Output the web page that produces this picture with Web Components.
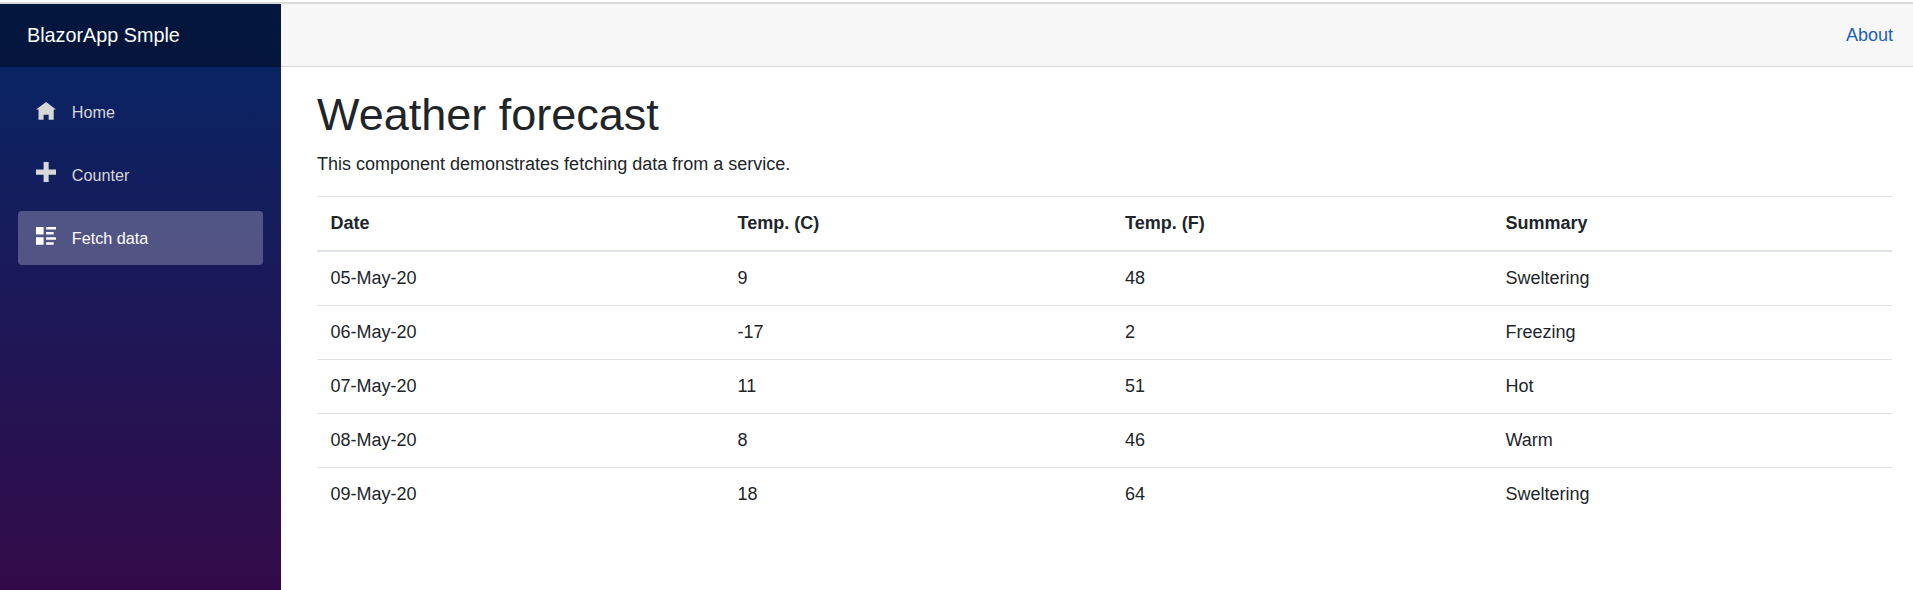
<!DOCTYPE html>
<html>
<head>
<meta charset="utf-8">
<title>BlazorApp Smple</title>
<style>
  html, body { margin: 0; height: 100%; }
  body { font-family: "Liberation Sans", Arial, sans-serif; color: #212529; background: #fff; overflow: hidden; }
</style>
</head>
<body>
<app-shell>
  <nav-menu slot="side" brand="BlazorApp Smple">
    <nav-link icon="home">Home</nav-link>
    <nav-link icon="plus">Counter</nav-link>
    <nav-link icon="list" active>Fetch data</nav-link>
  </nav-menu>
  <top-row slot="top"><a href="#">About</a></top-row>
  <fetch-data></fetch-data>
</app-shell>

<script>
class AppShell extends HTMLElement {
    constructor() {
        super();
        this.attachShadow({mode: "open"}).innerHTML = `
            <style>
                :host { display: block; height: 100vh; border-top: 2px solid #fff; box-sizing: border-box; }
                .line { height: 2px; background: #d9d9d9; }
                .app { display: flex; height: calc(100% - 2px); }
                .side { width: 281px; flex: none; }
                .main { flex: 1; min-width: 0; }
            </style>
            <div class="line"></div>
            <div class="app">
                <div class="side"><slot name="side"></slot></div>
                <div class="main">
                    <slot name="top"></slot>
                    <slot></slot>
                </div>
            </div>`;
    }
}

class NavMenu extends HTMLElement {
    constructor() {
        super();
        this.attachShadow({mode: "open"}).innerHTML = `
            <style>
                :host {
                    display: block;
                    height: 100%;
                    background: linear-gradient(180deg, rgb(5, 39, 103) 0%, #330a49 100%);
                }
                .brand {
                    height: 63px;
                    background: rgba(0, 0, 0, 0.4);
                    display: flex;
                    align-items: center;
                    padding-left: 27px;
                    color: #fff;
                    font-size: 19.8px;
                }
                ul { list-style: none; margin: 0; padding: 18px 18px 0; display: flex; flex-direction: column; }
            </style>
            <div class="brand"></div>
            <ul><slot></slot></ul>`;
        this.shadowRoot.querySelector(".brand").textContent = this.getAttribute("brand");
    }
}

// open iconic glyphs, 8x8 grid. lift = how far the glyph sits above the row centre
const ICONS = {
    home: {lift: 0, d: "M4 0l-4 3h1v4h2v-2h2v2h2v-4.03l1 .03-4-3z"},
    plus: {lift: 6, d: "M3 0v3h-3v2h3v3h2v-3h3v-2h-3v-3h-2z"},
    list: {lift: 2, d: "M0 0v3h3v-3h-3zm4 0v1h4v-1h-4zm0 2v1h3v-1h-3zm-4 2v3h3v-3h-3zm4 0v1h4v-1h-4zm0 2v1h3v-1h-3z"}
};

class NavLink extends HTMLElement {
    constructor() {
        super();
        this.attachShadow({mode: "open"}).innerHTML = `
            <style>
                :host { display: block; padding-bottom: 9px; }
                a {
                    display: flex;
                    align-items: center;
                    height: 54px;
                    border-radius: 4px;
                    color: #d7d7d7;
                    font-size: 16.2px;
                    text-decoration: none;
                }
                :host([active]) a { background: rgba(255, 255, 255, 0.25); color: #fff; }
                svg { width: 20.25px; height: 20.25px; margin: 0 15.5px 0 18px; fill: currentColor; flex: none; }
            </style>
            <a href="#"><svg viewBox="0 0 8 8"><path></path></svg><slot></slot></a>`;
        const icon = ICONS[this.getAttribute("icon")];
        this.shadowRoot.querySelector("path").setAttribute("d", icon.d);
        this.shadowRoot.querySelector("svg").style.marginTop = `-${icon.lift}px`;
    }
}

class TopRow extends HTMLElement {
    constructor() {
        super();
        this.attachShadow({mode: "open"}).innerHTML = `
            <style>
                :host {
                    display: flex;
                    justify-content: flex-end;
                    align-items: center;
                    box-sizing: border-box;
                    height: 63px;
                    padding-right: 20px;
                    background: #f7f7f7;
                    border-bottom: 1px solid #d6d5d5;
                    font-size: 18px;
                }
                ::slotted(a) { color: #1b5fbe; text-decoration: none; }
            </style>
            <slot></slot>`;
    }
}

class FetchData extends HTMLElement {
    constructor() {
        super();
        const rows = [
            ["05-May-20", "9", "48", "Sweltering"],
            ["06-May-20", "-17", "2", "Freezing"],
            ["07-May-20", "11", "51", "Hot"],
            ["08-May-20", "8", "46", "Warm"],
            ["09-May-20", "18", "64", "Sweltering"]
        ];
        this.attachShadow({mode: "open"}).innerHTML = `
            <style>
                :host { display: block; padding: 21px 21px 0 36px; }
                h1 { margin: 0 0 9px; font-size: 45px; font-weight: 400; line-height: 54px; }
                p { margin: 0 0 18px; font-size: 18px; line-height: 27px; }
                table { width: 100%; border-collapse: collapse; font-size: 18px; table-layout: fixed; }
                th, td { padding: 13px 13.5px; text-align: left; border-top: 1px solid #dee2e6; line-height: 27px; font-weight: 400; }
                th { font-weight: 700; border-bottom: 2px solid #dee2e6; }
            </style>
            <h1>Weather forecast</h1>
            <p>This component demonstrates fetching data from a service.</p>
            <table>
                <colgroup><col style="width:407px"><col style="width:387.5px"><col style="width:380.5px"><col></colgroup>
                <thead><tr><th>Date</th><th>Temp. (C)</th><th>Temp. (F)</th><th>Summary</th></tr></thead>
                <tbody>${rows.map(r => `<tr>${r.map(c => `<td>${c}</td>`).join("")}</tr>`).join("")}</tbody>
            </table>`;
    }
}

customElements.define("app-shell", AppShell);
customElements.define("nav-menu", NavMenu);
customElements.define("nav-link", NavLink);
customElements.define("top-row", TopRow);
customElements.define("fetch-data", FetchData);
</script>
</body>
</html>
